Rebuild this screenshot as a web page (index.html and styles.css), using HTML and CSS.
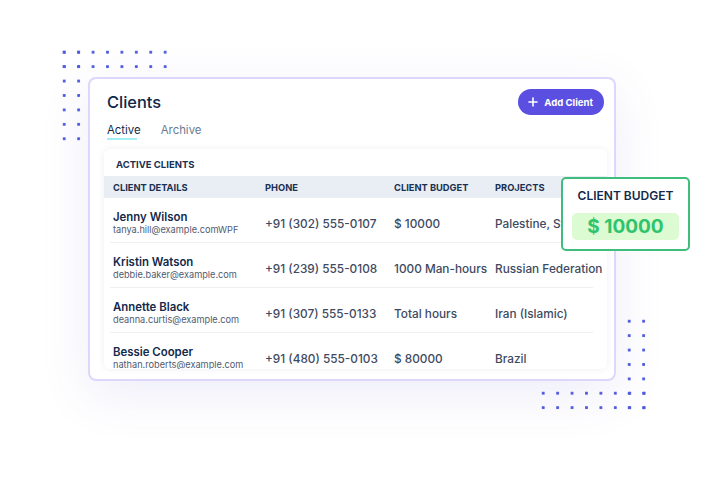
FILE: index.html
```html
<!DOCTYPE html>
<html lang="en">
<head>
    <title>Clients</title>
    <link rel="stylesheet" href="styles.css">
</head>
<body>
    <div class="stage">
        <div class="dots dots-top"></div>
        <div class="dots dots-left"></div>
        <div class="dots dots-right"></div>
        <div class="dots dots-bottom"></div>

        <div class="card">
            <div class="card-head">
                <h1>Clients</h1>
                <button type="button" class="add-btn">
                    <svg width="10" height="10" viewBox="0 0 10 10"><path d="M5 1v8M1 5h8" stroke="#fff" stroke-width="1.6" stroke-linecap="round"/></svg>
                    Add Client
                </button>
            </div>
            <div class="tabs">
                <span class="tab active">Active</span>
                <span class="tab">Archive</span>
            </div>
            <div class="table-card">
                <div class="table-title">ACTIVE CLIENTS</div>
                <div class="thead">
                    <span>CLIENT DETAILS</span>
                    <span>PHONE</span>
                    <span>CLIENT BUDGET</span>
                    <span>PROJECTS</span>
                </div>
                <div class="row">
                    <div class="client">
                        <div class="name">Jenny Wilson</div>
                        <div class="email">tanya.hill@example.comWPF</div>
                    </div>
                    <span>+91 (302) 555-0107</span>
                    <span>$ 10000</span>
                    <span>Palestine, State of</span>
                </div>
                <div class="row">
                    <div class="client">
                        <div class="name">Kristin Watson</div>
                        <div class="email">debbie.baker@example.com</div>
                    </div>
                    <span>+91 (239) 555-0108</span>
                    <span>1000 Man-hours</span>
                    <span>Russian Federation</span>
                </div>
                <div class="row">
                    <div class="client">
                        <div class="name">Annette Black</div>
                        <div class="email">deanna.curtis@example.com</div>
                    </div>
                    <span>+91 (307) 555-0133</span>
                    <span>Total hours</span>
                    <span>Iran (Islamic)</span>
                </div>
                <div class="row">
                    <div class="client">
                        <div class="name">Bessie Cooper</div>
                        <div class="email">nathan.roberts@example.com</div>
                    </div>
                    <span>+91 (480) 555-0103</span>
                    <span>$ 80000</span>
                    <span>Brazil</span>
                </div>
            </div>
        </div>

        <div class="budget-pop">
            <div class="pop-title">CLIENT BUDGET</div>
            <div class="pop-value">$ 10000</div>
        </div>
    </div>
</body>
</html>
```

FILE: styles.css
```css
body {
    margin: 0;
    font-family: Inter, "Noto Sans", sans-serif;
    background-color: #fff;
    color: #13294b;
}
.stage {
    position: relative;
    width: 720px;
    height: 481px;
    padding: 77px 0 0 88px;
    box-sizing: border-box;
    overflow: hidden;
}
.dots {
    position: absolute;
    background-image: radial-gradient(circle, #4f5be0 1.3px, transparent 1.7px);
    background-size: 14.43px 14.43px;
}
.dots-top {
    left: 57px;
    top: 45px;
    width: 115.5px;
    height: 28.9px;
}
.dots-left {
    left: 57px;
    top: 45px;
    width: 28.9px;
    height: 101px;
}
.dots-right {
    left: 621.5px;
    top: 313.5px;
    width: 28.9px;
    height: 101px;
}
.dots-bottom {
    left: 535.5px;
    top: 385.5px;
    width: 115.5px;
    height: 28.9px;
}
.card {
    position: relative;
    width: 528px;
    height: 304px;
    box-sizing: border-box;
    padding: 10px 7px 9px 14px;
    background-color: #fff;
    border: 2px solid #ddd7fb;
    border-radius: 8px;
    box-shadow: 0 14px 50px rgba(90, 80, 200, 0.10);
}
.card-head {
    display: flex;
    justify-content: space-between;
    align-items: center;
    padding: 0 3px;
}
h1 {
    margin: 0;
    font-size: 16.4px;
    font-weight: 500;
    color: #0f2748;
}
.add-btn {
    display: flex;
    align-items: center;
    gap: 6px;
    height: 26px;
    padding: 0 11px 0 10px;
    border: none;
    border-radius: 13px;
    background-color: #5b4fe1;
    color: #fff;
    font-family: inherit;
    font-size: 9.6px;
    font-weight: 700;
}
.tabs {
    display: flex;
    gap: 20px;
    margin-top: 7px;
    padding-left: 3px;
}
.tab {
    position: relative;
    font-size: 11.4px;
    line-height: 16px;
    padding-bottom: 1px;
    color: #6b7a90;
}
.tab.active {
    color: #13294b;
}
.tab.active::after {
    content: "";
    position: absolute;
    left: 0;
    bottom: -1px;
    width: 30px;
    height: 2px;
    background-color: #a4eef5;
}
.table-card {
    height: 220px;
    margin-top: 10px;
    border-radius: 6px;
    overflow: hidden;
    background-color: #fff;
    box-shadow: 0 0 6px rgba(120, 120, 170, 0.12);
}
.table-title {
    padding: 10px 12px 5px;
    font-size: 9.5px;
    line-height: 12px;
    font-weight: 700;
    color: #1b3152;
}
.thead,
.row {
    display: grid;
    grid-template-columns: 152px 129px 101px 1fr;
    align-items: center;
    white-space: nowrap;
}
.thead {
    height: 22px;
    padding-left: 9px;
    background-color: #e9eef5;
    font-size: 9.3px;
    font-weight: 700;
    color: #1b3152;
}
.row {
    height: 45px;
    box-sizing: border-box;
    margin: 0 14px 0 6px;
    padding: 7px 0 0 3px;
    border-bottom: 1px solid #eef0f4;
    font-size: 11.8px;
    font-weight: 500;
    color: #3e4a61;
}
.name {
    font-size: 11.4px;
    line-height: 13px;
    font-weight: 600;
    color: #13294b;
}
.email {
    font-size: 9.2px;
    line-height: 12px;
    font-weight: 400;
    color: #4f5b70;
}
.budget-pop {
    position: absolute;
    left: 561px;
    top: 177px;
    width: 129px;
    height: 74px;
    box-sizing: border-box;
    padding: 9px 9px 0;
    background-color: #fff;
    border: 2px solid #3fbd7c;
    border-radius: 5px;
    text-align: center;
}
.pop-title {
    font-size: 12px;
    line-height: 16px;
    font-weight: 600;
    color: #13294b;
}
.pop-value {
    margin-top: 9px;
    height: 27px;
    line-height: 27px;
    border-radius: 5px;
    background-color: #dcfbd2;
    color: #2fc36b;
    font-size: 19px;
    font-weight: 700;
}
```
